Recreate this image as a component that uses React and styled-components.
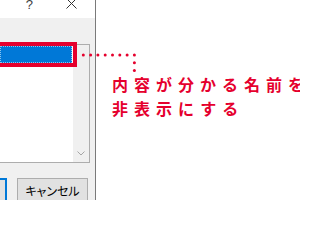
import React from "react";
import styled, { createGlobalStyle } from "styled-components";

const Global = createGlobalStyle`
  html, body { margin: 0; padding: 0; background: #ffffff; }
  * { box-sizing: border-box; }
`;

const RED = "#e5002d";

const Page = styled.div`
  position: relative;
  width: 300px;
  height: 200px;
  overflow: hidden;
  display: flex;
  background: #ffffff;
`;

const Dialog = styled.div`
  flex: none;
  width: 96px;
  height: 100%;
  display: flex;
  flex-direction: column;
  background: #f0f0f0;
  border-right: 1px solid #7a7a7a;
`;

const TitleBar = styled.div`
  flex: none;
  height: 18px;
  background: #ffffff;
  display: flex;
  justify-content: flex-end;
  align-items: flex-start;
  gap: 33px;
  padding-right: 18px;
`;

const Help = styled.span`
  font-family: "Liberation Sans", Arial, sans-serif;
  font-size: 13px;
  line-height: 13px;
  margin-top: -2px;
  color: #404040;
`;

const CloseIcon = styled.svg`
  margin-top: -2px;
  display: block;
`;

const Body = styled.div`
  flex: 1;
  display: flex;
  flex-direction: column;
  padding: 26px 5px 0 0;
`;

const ListBox = styled.div`
  flex: none;
  height: 119px;
  display: flex;
  background: #ffffff;
  border: 1px solid #adadad;
  border-left: none;
`;

const ListArea = styled.div`
  flex: 1;
  padding: 1px 1px 0 0;
`;

const Item = styled.div`
  position: relative;
  height: 17px;
  background: #0078d7;
  border: 1px dotted #8cc4ee;
`;

const Highlight = styled.div`
  position: absolute;
  top: -5px;
  bottom: -5px;
  left: -10px;
  right: -6px;
  border: 4px solid ${RED};
`;

const ScrollBar = styled.div`
  flex: none;
  width: 16px;
  background: #f0f0f0;
  display: flex;
  flex-direction: column;
  justify-content: flex-end;
`;

const ArrowButton = styled.div`
  height: 17px;
  display: flex;
  align-items: center;
  justify-content: center;
`;

const ButtonRow = styled.div`
  margin-top: 15px;
  display: flex;
  justify-content: flex-end;
  gap: 10px;
  padding-right: 2px;
`;

const Button = styled.div`
  flex: none;
  width: 71px;
  height: 24px;
  display: flex;
  align-items: center;
  justify-content: center;
  background: #e1e1e1;
  border: ${(p) => (p.$primary ? "2px solid #0078d7" : "1px solid #adadad")};
  font-family: "Noto Sans CJK JP", "Noto Sans", sans-serif;
  font-feature-settings: "palt";
  font-size: 12px;
  color: #000000;
`;

const Callout = styled.div`
  flex: 1;
  padding: 72px 0 0 16px;
  color: ${RED};
  font-family: "Noto Sans CJK JP", sans-serif;
  font-weight: 700;
  font-size: 16px;
  line-height: 24px;
  letter-spacing: 6px;
  white-space: nowrap;
`;

const Connector = styled.svg`
  position: absolute;
  left: 0;
  top: 0;
  pointer-events: none;
`;

export default function App() {
  const xs = Array.from({ length: 8 }, (_, i) => 83.3 + i * 7.3);
  const lastX = xs[xs.length - 1];
  return (
    <>
      <Global />
      <Page>
        <Dialog>
          <TitleBar>
            <Help>?</Help>
            <CloseIcon width="11" height="11" viewBox="0 0 11 11">
              <path d="M0.5 0.5 L10.5 10.5 M10.5 0.5 L0.5 10.5" stroke="#333" strokeWidth="1" fill="none" />
            </CloseIcon>
          </TitleBar>
          <Body>
            <ListBox>
              <ListArea>
                <Item>
                  <Highlight />
                </Item>
              </ListArea>
              <ScrollBar>
                <ArrowButton>
                  <svg width="8" height="5" viewBox="0 0 8 5">
                    <path d="M0.5 0.5 L4 4 L7.5 0.5" stroke="#a6a6a6" strokeWidth="1" fill="none" />
                  </svg>
                </ArrowButton>
              </ScrollBar>
            </ListBox>
            <ButtonRow>
              <Button $primary>OK</Button>
              <Button>キャンセル</Button>
            </ButtonRow>
          </Body>
        </Dialog>
        <Callout>
          内容が分かる名前を
          <br />
          非表示にする
        </Callout>
        <Connector width="300" height="200" viewBox="0 0 300 200">
          {xs.map((x) => (
            <circle key={x} cx={x} cy={55} r={1.5} fill={RED} />
          ))}
          <circle cx={lastX} cy={62.7} r={1.5} fill={RED} />
          <circle cx={lastX} cy={70.4} r={1.5} fill={RED} />
        </Connector>
      </Page>
    </>
  );
}
